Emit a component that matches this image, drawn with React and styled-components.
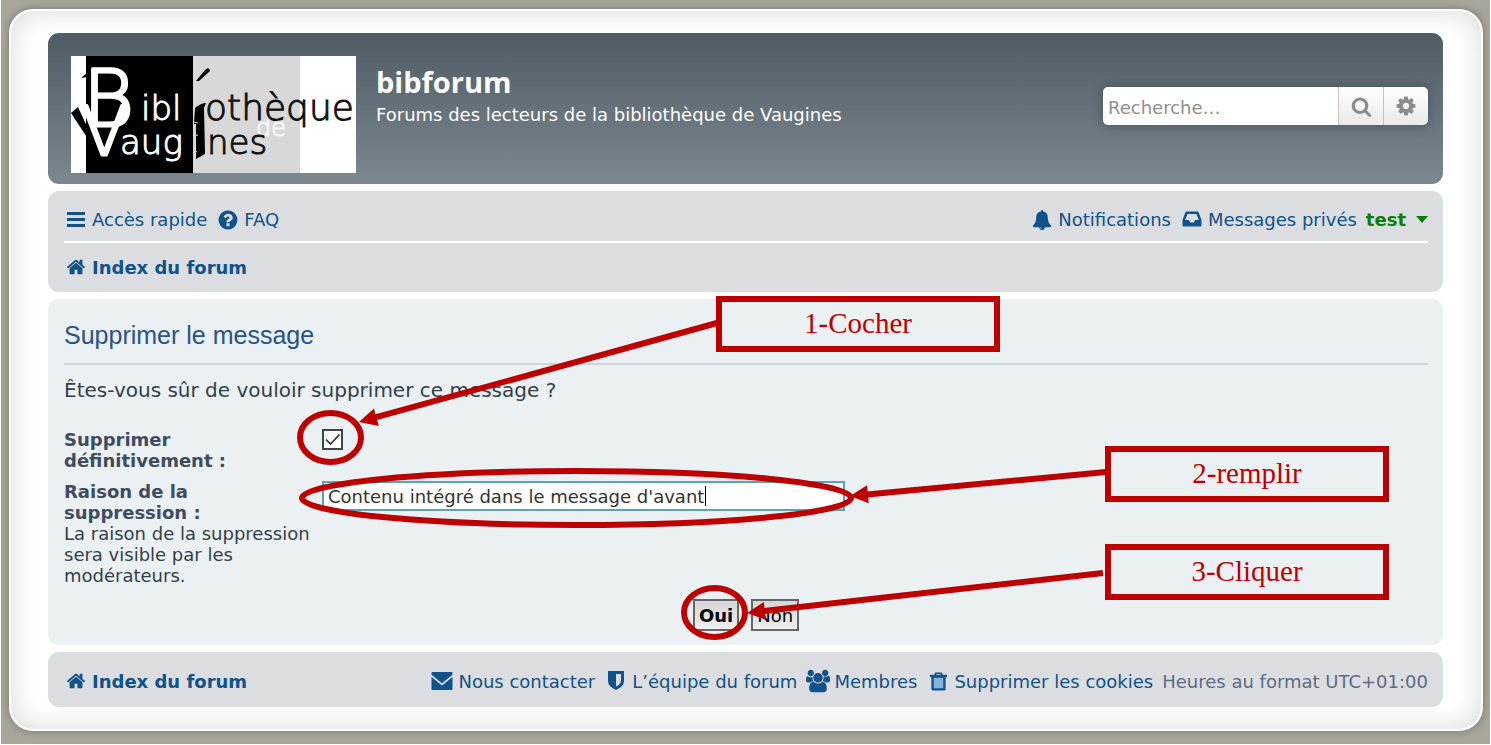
import React, { useState } from 'react';
import styled, { createGlobalStyle } from 'styled-components';

const ICONS = {
  home: {
    box: '0 0 1792 1792',
    d: 'M1472 992v480q0 26-19 45t-45 19h-384v-384h-256v384h-384q-26 0-45-19t-19-45v-480q0-1 .5-3t.5-3l575-474 575 474q1 2 1 6zm223-69l-62 74q-8 9-21 11h-3q-13 0-21-7l-692-577-692 577q-12 8-24 7-13-2-21-11l-62-74q-8-10-7-23.5t11-21.5l719-599q32-26 76-26t76 26l244 204v-195q0-14 9-23t23-9h192q14 0 23 9t9 23v408l219 182q10 8 11 21.5t-7 23.5z',
  },
  bars: {
    box: '0 0 20 20',
    d: 'M1 2h18v3H1zM1 8h18v3H1zM1 14h18v3H1z',
  },
  question: {
    box: '0 0 1792 1792',
    d: 'M1024 1376v-192q0-14-9-23t-23-9h-192q-14 0-23 9t-9 23v192q0 14 9 23t23 9h192q14 0 23-9t9-23zm256-672q0-88-55.5-163t-138.5-116-170-41q-243 0-371 213-15 24 8 42l132 100q7 6 19 6 16 0 25-12 53-68 86-92 34-24 86-24 48 0 85.5 26t37.5 59q0 38-20 61t-68 45q-63 28-115.5 86.5t-52.5 125.5v36q0 14 9 23t23 9h192q14 0 23-9t9-23q0-19 21.5-49.5t54.5-49.5q32-18 49-28.5t46-35 44.5-48 28-60.5 12.5-81zm384 192q0 209-103 385.5t-279.5 279.5-385.5 103-385.5-103-279.5-279.5-103-385.5 103-385.5 279.5-279.5 385.5-103 385.5 103 279.5 279.5 103 385.5z',
  },
  bell: {
    box: '0 0 1792 1792',
    d: 'M912 1696q0-16-16-16-59 0-101.5-42.5t-42.5-101.5q0-16-16-16t-16 16q0 73 51.5 124.5t124.5 51.5q16 0 16-16zm816-288q0 52-38 90t-90 38h-448q0 106-75 181t-181 75-181-75-75-181h-448q-52 0-90-38t-38-90q50-42 91-88t85-119.5 74.5-158.5 50-206 19.5-260q0-152 117-282.5t307-158.5q-8-19-8-39 0-40 28-68t68-28 68 28 28 68q0 20-8 39 190 28 307 158.5t117 282.5q0 139 19.5 260t50 206 74.5 158.5 85 119.5 91 88z',
  },
  inbox: {
    box: '0 0 20 20',
    d: 'M4.5 1.500h11q.8 0 1.100.8L19.500 10v5.200q0 1.300-1.300 1.300H1.800Q.5 16.500.5 15.200V10L3.400 2.300q.3-.8 1.100-.8zM5.500 4L3.200 10h3.600l1.300 2.600h3.800l1.300-2.600h3.600L14.500 4z',
  },
  search: {
    box: '0 0 1792 1792',
    d: 'M1216 832q0-185-131.5-316.5t-316.5-131.5-316.5 131.5-131.5 316.5 131.5 316.5 316.5 131.5 316.5-131.5 131.5-316.5zm512 832q0 52-38 90t-90 38q-54 0-90-38l-343-342q-179 124-399 124-143 0-273.5-55.5t-225-150-150-225-55.5-273.5 55.5-273.5 150-225 225-150 273.5-55.5 273.5 55.5 225 150 150 225 55.5 273.5q0 220-124 399l343 343q37 37 37 90z',
  },
  cog: {
    box: '0 0 1792 1792',
    d: 'M1152 896q0-106-75-181t-181-75-181 75-75 181 75 181 181 75 181-75 75-181zm512-109v222q0 12-8 23t-20 13l-185 28q-19 54-39 91 35 50 107 138 10 12 10 25t-9 23q-27 37-99 108t-94 71q-12 0-26-9l-138-108q-44 23-91 38-16 136-29 186-7 28-36 28h-222q-14 0-24.5-8.5t-11.5-21.5l-28-184q-49-16-90-37l-141 107q-10 9-25 9-14 0-25-11-126-114-165-168-7-10-7-23 0-12 8-23 15-21 51-66.5t54-70.5q-27-50-41-99l-183-27q-13-2-21-12.5t-8-23.5v-222q0-12 8-23t19-13l186-28q14-46 39-92-40-57-107-138-10-12-10-24 0-10 9-23 26-36 98.5-107.5t94.5-71.5q13 0 26 10l138 107q44-23 91-38 16-136 29-186 7-28 36-28h222q14 0 24.5 8.5t11.5 21.5l28 184q49 16 90 37l142-107q9-9 24-9 13 0 25 10 129 119 165 170 7 8 7 22 0 12-8 23-15 21-51 66.5t-54 70.5q26 50 41 98l183 28q13 2 21 12.5t8 23.5z',
  },
  envelope: {
    box: '0 0 22 22',
    d: 'M1.500 2h19q1 0 1 1v1.800L11 13.200.500 4.800V3q0-1 1-1zM.500 7L11 15.400 21.500 7v12q0 1-1 1h-19q-1 0-1-1z',
  },
  shield: {
    box: '0 0 20 20',
    d: 'M2 0h16v10q0 5.500-8 9-8-3.500-8-9zM10 3v12.500q5-2.500 5-6V3z',
  },
  users: {
    box: '0 0 1920 1792',
    d: 'M593 896q-162 5-265 128h-134q-82 0-138-40.5t-56-118.5q0-353 124-353 6 0 43.5 21t97.5 42.5 119 21.5q67 0 133-23-5 37-5 66 0 159 90 293zm1071 637q0 120-73 189.5t-194 69.5h-874q-121 0-194-69.5t-73-189.5q0-53 3.5-103.5t14-109 26.5-108.5 43-97.5 62-81 85.5-53.5 111.5-20q10 0 43 21.5t73 48 107 48 135 21.5 135-21.5 107-48 73-48 43-21.5q61 0 111.5 20t85.5 53.5 62 81 43 97.5 26.5 108.5 14 109 3.5 103.500zm-1024-1277q0 106-75 181t-181 75-181-75-75-181 75-181 181-75 181 75 75 181zm704 384q0 159-112.5 271.5t-271.5 112.5-271.5-112.5-112.5-271.5 112.5-271.5 271.5-112.5 271.5 112.5 112.5 271.5zm576 225q0 78-56 118.5t-138 40.5h-134q-103-123-265-128 90-134 90-293 0-29-5-66 66 23 133 23 59 0 119-21.5t97.5-42.5 43.5-21q124 0 124 353zm-128-609q0 106-75 181t-181 75-181-75-75-181 75-181 181-75 181 75 75 181z',
  },
  trash: {
    box: '0 0 20 20',
    d: 'M6.500.500h7l1 2.500H19v2.500h-1.500V18q0 1.500-1.500 1.500H4Q2.500 19.500 2.500 18V5.500H1V3h4.500zM8 2l-.5 1h5L12 2zM5 6v11h10V6z',
  },
};

function Icon({ name, size = 20, fill }) {
  return (
    <svg width={size} height={size} viewBox={ICONS[name].box} aria-hidden="true">
      {fill && <rect x="4" y="5" width="12" height="13" fill={fill} />}
      <path d={ICONS[name].d} fill="currentColor" fillRule="evenodd" />
    </svg>
  );
}

function NavLink({ icon, size, fill, bold, children }) {
  return (
    <LinkItem href="#" $bold={bold}>
      <IconSlot>
        <Icon name={icon} size={size} fill={fill} />
      </IconSlot>
      {children}
    </LinkItem>
  );
}

function Logo() {
  return (
    <LogoArt width="285" height="117" viewBox="0 0 285 117" role="img" aria-label="Bibliothèque de Vaugines">
      <rect width="285" height="117" fill="#fff" />
      <rect x="15" width="107" height="117" fill="#000" />
      <rect x="122" width="107" height="117" fill="#d8d8d8" />
      <path d="M0 57l7-6 12 26v9z" fill="#000" />
      <g fill="#fff" stroke="#fff" strokeWidth="3" strokeLinejoin="round">
        <text x="12" y="70" fontSize="78">B</text>
        <text x="10" y="99" fontSize="68">V</text>
      </g>
      <g fill="#fff" stroke="#fff" fontSize="34">
        <text x="70" y="64">ibl</text>
        <text x="49" y="98">aug</text>
      </g>
      <text x="185" y="80" fontSize="24" fill="#f6f6f6" stroke="#f6f6f6">de</text>
      <g fill="#111" stroke="#111">
        <text x="134" y="64" fontSize="36">othèque</text>
        <text x="136" y="98" fontSize="34">nes</text>
      </g>
      <path d="M10 22l6-5v4z" fill="#000" />
      <path d="M125 25l9-11q4-4 5 1l-11 10z" fill="#000" />
      <path d="M124 52q6-5 11-5l-2 5 1 46-9 5V68h-2z" fill="#000" />
      <path d="M122 66l5 1M122 80l5-1M123 94l3 2" stroke="#ddd" strokeWidth="1" />
    </LogoArt>
  );
}

// line drawn up to the base of the triangular head
function Arrow({ from, to }) {
  const dx = to[0] - from[0];
  const dy = to[1] - from[1];
  const len = Math.hypot(dx, dy);
  const ux = dx / len;
  const uy = dy / len;
  const bx = to[0] - ux * 18;
  const by = to[1] - uy * 18;
  return (
    <g>
      <line x1={from[0]} y1={from[1]} x2={bx + ux} y2={by + uy} stroke="#bd0000" strokeWidth="6" />
      <polygon
        points={`${to[0]},${to[1]} ${bx - uy * 9},${by + ux * 9} ${bx + uy * 9},${by - ux * 9}`}
        fill="#bd0000"
      />
    </g>
  );
}

function Annotations() {
  return (
    <>
      <Drawing width="1400" height="700" viewBox="0 0 1400 700" aria-hidden="true">
        <g fill="none" stroke="#bd0000" strokeWidth="6">
          <ellipse cx="330.5" cy="437.5" rx="30.5" ry="24.5" />
          <ellipse cx="576.5" cy="498" rx="274.5" ry="27" />
          <ellipse cx="714.5" cy="612.5" rx="30.5" ry="24.5" />
        </g>
        <Arrow from={[717, 323]} to={[359, 422]} />
        <Arrow from={[1106, 472]} to={[850, 496]} />
        <Arrow from={[1103, 573]} to={[747, 613]} />
      </Drawing>
      <Callout $left={716} $top={296}>1-Cocher</Callout>
      <Callout $left={1105} $top={446}>2-remplir</Callout>
      <Callout $left={1105} $top={544}>3-Cliquer</Callout>
    </>
  );
}

function App() {
  const [hard, setHard] = useState(true);
  const [reason, setReason] = useState("Contenu intégré dans le message d'avant");

  return (
    <Page>
      <GlobalStyle />
      <Wrap>
        <Header>
          <Logo />
          <SiteDescription>
            <SiteTitle>bibforum</SiteTitle>
            <p>Forums des lecteurs de la bibliothèque de Vaugines</p>
          </SiteDescription>
          <SearchBox onSubmit={e => e.preventDefault()}>
            <SearchInput type="search" placeholder="Recherche…" aria-label="Recherche" />
            <SearchButton type="submit" aria-label="Rechercher">
              <Icon name="search" size={21} />
            </SearchButton>
            <SearchButton type="button" aria-label="Recherche avancée">
              <Icon name="cog" size={22} />
            </SearchButton>
          </SearchBox>
        </Header>

        <NavBar>
          <NavRow $line>
            <NavGroup>
              <NavLink icon="bars">Accès rapide</NavLink>
              <NavLink icon="question" size={22}>FAQ</NavLink>
            </NavGroup>
            <NavGroup>
              <NavLink icon="bell">Notifications</NavLink>
              <NavLink icon="inbox">Messages privés</NavLink>
              <UserLink href="#">
                test
                <svg width="12" height="7" viewBox="0 0 12 7" aria-hidden="true">
                  <path d="M0 0h12L6 7z" fill="currentColor" />
                </svg>
              </UserLink>
            </NavGroup>
          </NavRow>
          <NavRow>
            <NavLink icon="home" bold>Index du forum</NavLink>
          </NavRow>
        </NavBar>

        <Panel onSubmit={e => e.preventDefault()}>
          <PanelTitle>Supprimer le message</PanelTitle>
          <Question>Êtes-vous sûr de vouloir supprimer ce message ?</Question>
          <Field>
            <FieldName>
              <label htmlFor="delete_permanent">Supprimer définitivement :</label>
            </FieldName>
            <InputWrap>
              <Checkbox
                id="delete_permanent"
                type="checkbox"
                checked={hard}
                onChange={e => setHard(e.target.checked)}
              />
              {hard && (
                <Tick viewBox="0 0 21 21" aria-hidden="true">
                  <path d="M4 10.5l4.500 4.500 9-9.500" fill="none" stroke="#333" strokeWidth="1.7" />
                </Tick>
              )}
            </InputWrap>
          </Field>
          <Field>
            <FieldName>
              <label htmlFor="delete_reason">Raison de la suppression :</label>
              <Help>La raison de la suppression sera visible par les modérateurs.</Help>
            </FieldName>
            <InputWrap>
              <ReasonInput
                id="delete_reason"
                type="text"
                value={reason}
                onChange={e => setReason(e.target.value)}
              />
              <Caret />
            </InputWrap>
          </Field>
          <Buttons>
            <Button type="submit" $bold>Oui</Button>
            <Button type="button">Non</Button>
          </Buttons>
        </Panel>

        <FooterBar>
          <NavLink icon="home" bold>Index du forum</NavLink>
          <NavGroup>
            <NavLink icon="envelope" size={22}>Nous contacter</NavLink>
            <NavLink icon="shield">L’équipe du forum</NavLink>
            <NavLink icon="users" size={24}>Membres</NavLink>
            <NavLink icon="trash" size={19} fill="#7fb2dd">Supprimer les cookies</NavLink>
            <Timezone>Heures au format UTC+01:00</Timezone>
          </NavGroup>
        </FooterBar>
      </Wrap>
      <Annotations />
    </Page>
  );
}

const GlobalStyle = createGlobalStyle`
  * {
    box-sizing: border-box;
  }

  body {
    margin: 0;
    background: #fff;
    color: #333f4b;
    font-family: 'DejaVu Sans', Verdana, sans-serif;
    font-size: 18px;
    line-height: 21px;
  }

  h1, h2, p {
    margin: 0;
  }

  a {
    color: #105289;
    text-decoration: none;
  }

  svg {
    display: block;
    flex: none;
  }
`;

const Page = styled.div`
  position: relative;
  margin: 0 1px 1px;
  padding: 9px 7px 13px 8px;
  background: #a9a69b;
`;

const Wrap = styled.div`
  display: flex;
  flex-direction: column;
  gap: 7px;
  padding: 22px 38px 22px 37px;
  border: 2px solid #fff;
  border-radius: 24px;
  background: #fff;
  box-shadow: inset 0 0 28px #d8d8d8, 0 0 8px #77776f;
`;

const Header = styled.header`
  display: flex;
  gap: 20px;
  padding: 23px 15px 11px 23px;
  border-radius: 11px;
  background: linear-gradient(#505c65, #7c8890);
  color: #fff;
`;

const LogoArt = styled.svg`
  font-family: 'DejaVu Sans Light', 'DejaVu Sans', sans-serif;
  font-weight: 200;
`;

const SiteDescription = styled.div`
  flex: 1;
  padding-top: 8px;
`;

const SiteTitle = styled.h1`
  padding-bottom: 4px;
  font-family: 'Open Sans', sans-serif;
  font-size: 29px;
  line-height: 36px;
`;

const SearchBox = styled.form`
  display: flex;
  align-self: flex-start;
  width: 325px;
  height: 38px;
  margin-top: 31px;
  overflow: hidden;
  border-radius: 5px;
  box-shadow: 0 0 12px #46525b;
`;

const SearchInput = styled.input`
  flex: 1;
  min-width: 0;
  padding: 2px 5px 0;
  border: 0;
  background: #fff;
  font: inherit;

  &::placeholder {
    color: #8f8f8f;
    opacity: 1;
  }
`;

const SearchButton = styled.button`
  display: flex;
  align-items: center;
  justify-content: center;
  width: 45px;
  padding: 0;
  border: 0;
  border-left: 1px solid #c7c3bf;
  background: linear-gradient(#fff, #e9e9e9);
  color: #8b8b8b;
`;

const NavBar = styled.nav`
  padding: 7px 15px 1px 16px;
  border-radius: 11px;
  background: #dcdde1;
`;

const NavRow = styled.div`
  display: flex;
  align-items: center;
  justify-content: space-between;
  height: ${props => (props.$line ? 45 : 48)}px;
  border-bottom: ${props => (props.$line ? '2px solid #fff' : '0')};
`;

const NavGroup = styled.div`
  display: flex;
  align-items: center;
  gap: 9px;
`;

const LinkItem = styled.a`
  display: flex;
  align-items: center;
  font-weight: ${props => (props.$bold ? 'bold' : 'normal')};
  white-space: nowrap;
`;

const IconSlot = styled.span`
  display: flex;
  justify-content: center;
  width: 24px;
  margin-right: 4px;
`;

const UserLink = styled.a`
  display: flex;
  align-items: center;
  gap: 10px;
  color: #0a7d0a;
  font-weight: bold;
`;

const Panel = styled.form`
  padding: 16px 15px 14px 16px;
  border-radius: 11px;
  background: #ebf0f3;
`;

const PanelTitle = styled.h2`
  padding-bottom: 8px;
  border-bottom: 2px solid #ced5da;
  color: #28528c;
  font-family: 'Liberation Sans', Arial, sans-serif;
  font-size: 25px;
  font-weight: normal;
  line-height: 40px;
`;

const Question = styled.p`
  padding: 13px 0 27px;
  font-size: 20px;
  line-height: 24px;
`;

const Field = styled.div`
  display: flex;
  align-items: flex-start;
  margin-bottom: 10px;
`;

const FieldName = styled.div`
  width: 258px;
  padding-right: 8px;

  label {
    display: block;
    max-width: 200px;
    color: #3f4c60;
    font-weight: bold;
  }
`;

const Help = styled.span`
  display: block;
`;

const InputWrap = styled.div`
  position: relative;
  display: flex;
`;

const Checkbox = styled.input`
  appearance: none;
  width: 21px;
  height: 21px;
  margin: 0;
  border: 2px solid #444;
  background: #fff;
`;

const Tick = styled.svg`
  position: absolute;
  inset: 0;
  pointer-events: none;
`;

const ReasonInput = styled.input`
  width: 523px;
  height: 30px;
  padding: 0 4px;
  border: 2px solid #57a5bc;
  background: #fff;
  color: #333;
  font: inherit;
`;

const Caret = styled.span`
  position: absolute;
  top: 5px;
  left: 383px;
  width: 1px;
  height: 20px;
  background: #000;
`;

const Buttons = styled.div`
  display: flex;
  justify-content: center;
  gap: 12px;
  padding-top: 3px;
`;

const Button = styled.button`
  height: 32px;
  padding: 0 4px;
  border: 2px solid #666;
  background: linear-gradient(#d6d6d6, #efefef);
  color: #000;
  font: inherit;
  font-weight: ${props => (props.$bold ? 'bold' : 'normal')};
`;

const FooterBar = styled.footer`
  display: flex;
  align-items: center;
  justify-content: space-between;
  min-height: 55px;
  padding: 3px 15px 0 16px;
  border-radius: 11px;
  background: #dcdde1;
`;

const Timezone = styled.span`
  color: #5c6a84;
  white-space: nowrap;
`;

const Drawing = styled.svg`
  position: absolute;
  top: 0;
  left: -1px;
  pointer-events: none;
`;

const Callout = styled.div`
  position: absolute;
  top: ${props => props.$top}px;
  left: ${props => props.$left - 1}px;
  width: 284px;
  height: 56px;
  border: 6px solid #bd0000;
  background: #ebf0f3;
  color: #bd0000;
  font-family: 'Liberation Serif', 'Times New Roman', serif;
  font-size: 29px;
  line-height: 42px;
  text-align: center;
`;

export default App;
